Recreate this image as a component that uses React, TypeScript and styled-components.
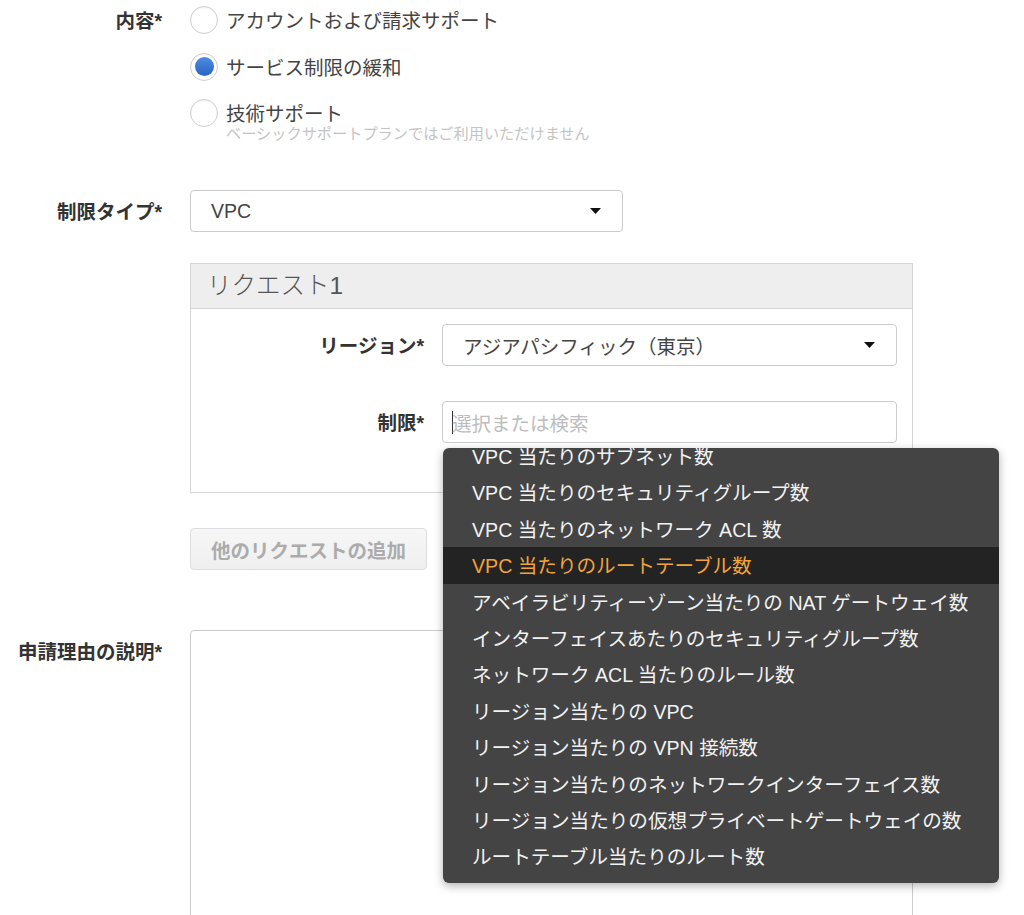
import React from "react";
import styled, { createGlobalStyle } from "styled-components";

const GlobalStyle = createGlobalStyle`
  html, body { margin: 0; padding: 0; background: #fff; overflow: hidden; }
  * { box-sizing: border-box; }
`;

const Page = styled.div`
  width: 1024px;
  height: 915px;
  overflow: hidden;
  padding-top: 6px;
  font-family: "Liberation Sans", "Noto Sans CJK JP", sans-serif;
  color: #444;
`;

const FormRow = styled.div<{ $mt: number; $align?: string }>`
  display: grid;
  grid-template-columns: 162px 723px;
  column-gap: 28px;
  margin-top: ${(p) => p.$mt}px;
  align-items: ${(p) => p.$align ?? "start"};
`;

const Label = styled.div<{ $pt?: number }>`
  text-align: right;
  font-weight: 700;
  font-size: 19.5px;
  line-height: 28px;
  color: #333;
  padding-top: ${(p) => (p.$pt ?? 0) + 1}px;
  white-space: nowrap;
`;

const RadioGroup = styled.div`
  display: flex;
  flex-direction: column;
  gap: 17.5px;
`;

const RadioOption = styled.label`
  display: flex;
  align-items: flex-start;
  gap: 8px;
`;

const RadioCircle = styled.span<{ $checked?: boolean }>`
  width: 28px;
  height: 28px;
  border-radius: 50%;
  border: 1px solid #cfcfcf;
  background: #fff;
  box-shadow: inset 0 1px 2px rgba(0, 0, 0, 0.06);
  display: flex;
  align-items: center;
  justify-content: center;
  flex-shrink: 0;
  &::after {
    content: "";
    display: ${(p) => (p.$checked ? "block" : "none")};
    width: 19px;
    height: 19px;
    border-radius: 50%;
    background: linear-gradient(#4d8ce0, #2864c4);
  }
`;

const RadioText = styled.div`
  display: flex;
  flex-direction: column;
`;

const RadioMain = styled.span`
  font-size: 19.5px;
  line-height: 28px;
  padding-top: 1px;
  color: #444;
`;

const RadioSub = styled.span`
  font-size: 15.2px;
  line-height: 16px;
  margin-top: -2px;
  color: #c4c4c4;
`;

const SelectBox = styled.div<{ $width?: string }>`
  width: ${(p) => p.$width ?? "100%"};
  height: 42px;
  border: 1px solid #cbcbcb;
  border-radius: 4px;
  background: #fff;
  display: flex;
  align-items: center;
  justify-content: space-between;
  padding: 0 21px 0 20px;
  font-size: 19.5px;
  color: #444;
`;

const Caret = styled.svg`
  width: 11px;
  height: 6px;
`;

const Panel = styled.div`
  grid-column: 2;
  border: 1px solid #d6d6d6;
`;

const PanelHeader = styled.div`
  height: 45px;
  background: #eeeeee;
  border-bottom: 1px solid #d6d6d6;
  padding-left: 16px;
  font-size: 24.5px;
  line-height: 44px;
  font-weight: 300;
  color: #555;
`;

const PanelBody = styled.div`
  display: grid;
  grid-template-columns: 233px 1fr;
  column-gap: 18px;
  row-gap: 35px;
  align-items: center;
  padding: 15px 15px 49px 0;
`;

const SearchWrap = styled.div`
  position: relative;
`;

const SearchInput = styled.div`
  height: 42px;
  border: 1px solid #cbcbcb;
  border-radius: 4px;
  background: #fff;
  display: flex;
  align-items: center;
  padding-left: 9px;
  font-size: 19.5px;
`;

const TextCursor = styled.span`
  width: 1px;
  height: 23px;
  background: #333;
  margin-right: -1px;
`;

const Placeholder = styled.span`
  color: #bdbdbd;
`;

const Menu = styled.div`
  position: absolute;
  left: 1px;
  top: calc(100% + 5px);
  width: 556px;
  height: 435px;
  background: #444444;
  border-radius: 6px;
  box-shadow: 0 3px 10px rgba(0, 0, 0, 0.3);
  overflow: hidden;
  z-index: 10;
`;

const MenuList = styled.ul`
  list-style: none;
  margin: -10px 0 0;
  padding: 0;
`;

const MenuItem = styled.li<{ $active?: boolean }>`
  height: 36.4px;
  line-height: 38px;
  padding-left: 29px;
  font-size: 19.6px;
  white-space: nowrap;
  color: ${(p) => (p.$active ? "#f2a33a" : "#f2f2f2")};
  background: ${(p) => (p.$active ? "#232323" : "transparent")};
`;

const AddButton = styled.button`
  grid-column: 2;
  width: 237px;
  height: 42px;
  border: 1px solid #dddddd;
  border-radius: 4px;
  background: linear-gradient(#f7f7f7, #efefef);
  font-family: inherit;
  font-size: 19.5px;
  font-weight: 700;
  color: #acacac;
  padding: 0;
`;

const TextArea = styled.div`
  height: 320px;
  border: 1px solid #cbcbcb;
  border-radius: 4px;
  background: #fff;
`;

const CaretIcon = () => (
  <Caret viewBox="0 0 11 6">
    <path d="M0 0 L11 0 L5.5 6 Z" fill="#111" />
  </Caret>
);

const menuItems = [
  "VPC 当たりのサブネット数",
  "VPC 当たりのセキュリティグループ数",
  "VPC 当たりのネットワーク ACL 数",
  "VPC 当たりのルートテーブル数",
  "アベイラビリティーゾーン当たりの NAT ゲートウェイ数",
  "インターフェイスあたりのセキュリティグループ数",
  "ネットワーク ACL 当たりのルール数",
  "リージョン当たりの VPC",
  "リージョン当たりの VPN 接続数",
  "リージョン当たりのネットワークインターフェイス数",
  "リージョン当たりの仮想プライベートゲートウェイの数",
  "ルートテーブル当たりのルート数",
];

export default function App() {
  return (
    <>
      <GlobalStyle />
      <Page>
        <FormRow $mt={0}>
          <Label>内容*</Label>
          <RadioGroup>
            <RadioOption>
              <RadioCircle />
              <RadioText>
                <RadioMain>アカウントおよび請求サポート</RadioMain>
              </RadioText>
            </RadioOption>
            <RadioOption>
              <RadioCircle $checked />
              <RadioText>
                <RadioMain>サービス制限の緩和</RadioMain>
              </RadioText>
            </RadioOption>
            <RadioOption>
              <RadioCircle />
              <RadioText>
                <RadioMain>技術サポート</RadioMain>
                <RadioSub>ベーシックサポートプランではご利用いただけません</RadioSub>
              </RadioText>
            </RadioOption>
          </RadioGroup>
        </FormRow>

        <FormRow $mt={48} $align="center">
          <Label>制限タイプ*</Label>
          <SelectBox $width="433px">
            <span>VPC</span>
            <CaretIcon />
          </SelectBox>
        </FormRow>

        <FormRow $mt={31}>
          <Panel>
            <PanelHeader>リクエスト1</PanelHeader>
            <PanelBody>
              <Label>リージョン*</Label>
              <SelectBox>
                <span>アジアパシフィック（東京）</span>
                <CaretIcon />
              </SelectBox>
              <Label>制限*</Label>
              <SearchWrap>
                <SearchInput>
                  <TextCursor />
                  <Placeholder>選択または検索</Placeholder>
                </SearchInput>
                <Menu>
                  <MenuList>
                    {menuItems.map((item, i) => (
                      <MenuItem key={item} $active={i === 3}>
                        {item}
                      </MenuItem>
                    ))}
                  </MenuList>
                </Menu>
              </SearchWrap>
            </PanelBody>
          </Panel>
        </FormRow>

        <FormRow $mt={35}>
          <AddButton>他のリクエストの追加</AddButton>
        </FormRow>

        <FormRow $mt={60}>
          <Label $pt={7}>申請理由の説明*</Label>
          <TextArea />
        </FormRow>
      </Page>
    </>
  );
}
